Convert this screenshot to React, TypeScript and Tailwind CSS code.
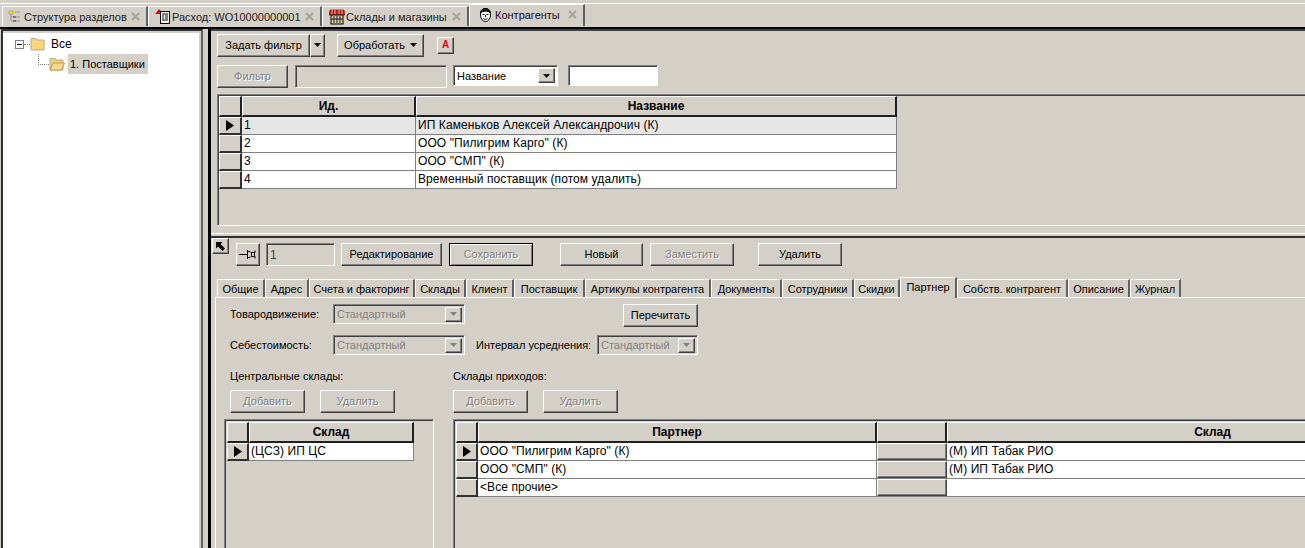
import type { ReactNode } from "react";

const raised = "border border-t-white border-l-white border-r-[#404040] border-b-[#404040] shadow-[inset_-1px_-1px_0_#808080]";
const sunken = "border border-t-[#808080] border-l-[#808080] border-r-white border-b-white shadow-[inset_1px_1px_0_#404040]";
const disabledText = "text-[#808080] [text-shadow:1px_1px_0_#fff]";

function Btn({ className = "h-[23px]", off, def, children }: { className?: string; off?: boolean; def?: boolean; children: ReactNode }) {
  return (
    <div
      className={`shrink-0 flex items-center justify-center pb-[1px] ${className} ${def ? "border border-black shadow-[inset_1px_1px_0_#fff,inset_-1px_-1px_0_#808080]" : raised} ${off ? disabledText : "text-black"}`}
    >
      {children}
    </div>
  );
}

function ArrowDown({ gray }: { gray?: boolean }) {
  return (
    <svg width="7" height="4" viewBox="0 0 7 4">
      <path d="M0 0h7L3.5 4z" fill={gray ? "#808080" : "#000"} />
    </svg>
  );
}

function Combo({ className, text }: { className: string; text: string }) {
  return (
    <div className={`h-[20px] shrink-0 flex items-center justify-between pl-[3px] pr-[2px] text-[#808080] ${sunken} ${className}`}>
      <span>{text}</span>
      <div className={`w-[17px] h-[15px] flex items-center justify-center ${raised}`}>
        <ArrowDown gray />
      </div>
    </div>
  );
}

function Tab({ icon, label, className, active }: { icon: ReactNode; label: string; className: string; active?: boolean }) {
  return (
    <div
      className={`shrink-0 flex items-center self-end border-l border-t border-r-2 border-t-white border-l-white border-r-[#606060] ${className} ${active ? "h-[22px] pb-[2px] bg-[#d4d0c8] text-[#1a0a2a]" : "h-[20px] text-[#222]"}`}
    >
      <span className="w-[17px] shrink-0 flex justify-center">{icon}</span>
      <span className="whitespace-nowrap ml-[1px]">{label}</span>
      <svg className="ml-auto mr-[6px] shrink-0" width="9" height="9" viewBox="0 0 9 9">
        <path d="M1 1l7 7M8 1l-7 7" stroke="#a8a49c" strokeWidth="2.2" />
      </svg>
    </div>
  );
}

function SubTab({ label, className, active }: { label: string; className: string; active?: boolean }) {
  return (
    <div
      className={`shrink-0 flex items-center justify-center self-end border-l border-t border-r-2 border-t-white border-l-white border-r-[#606060] whitespace-nowrap ${className} ${active ? "h-[21px] pb-[3px] bg-[#d4d0c8] mb-[-1px] relative" : "h-[18px]"}`}
    >
      {label}
    </div>
  );
}

function HeadCell({ className, children }: { className: string; children?: ReactNode }) {
  return (
    <div className={`h-[21px] shrink-0 flex items-center justify-center text-[12px] font-bold border-r-2 border-b-2 border-r-[#202020] border-b-[#202020] border-t border-l border-t-white border-l-white bg-[#d4d0c8] ${className}`}>
      {children}
    </div>
  );
}

function Indicator({ on, className = "w-[22px]" }: { on?: boolean; className?: string }) {
  return (
    <div className={`h-[18px] shrink-0 flex items-center justify-center border-r-2 border-b-2 border-r-[#303030] border-b-[#303030] border-t border-l border-t-white border-l-white bg-[#d4d0c8] ${className}`}>
      {on && (
        <svg width="8" height="11" viewBox="0 0 8 11">
          <path d="M0 0l8 5.5L0 11z" fill="#000" />
        </svg>
      )}
    </div>
  );
}

function Cell({ className, children }: { className: string; children?: ReactNode }) {
  return (
    <div className={`h-[18px] shrink-0 flex items-center pl-[2px] pb-[1px] text-[12px] tracking-[0.08px] whitespace-nowrap overflow-hidden border-r border-b border-[#808080] text-black ${className}`}>
      {children}
    </div>
  );
}

function Folder({ open }: { open?: boolean }) {
  return (
    <svg width="16" height="14" viewBox="0 0 16 14" className="shrink-0">
      <path d="M1 3V1.500h5L7 3h7v10H1z" fill={open ? "#f4cd7a" : "#fbd47e"} stroke="#b8ac90" />
      {open && <path d="M1 13l3-7h11.500l-3 7z" fill="#fbd98f" stroke="#c49a4a" />}
    </svg>
  );
}

const mainTabs = [
  { label: "Структура разделов", className: "w-[146px] pl-[3px]", icon: (
    <svg width="13" height="13" viewBox="0 0 13 13">
      <rect x="1" y="1" width="4" height="3" fill="#f2e814" stroke="#8a8a30" strokeWidth=".5" />
      <path d="M3 4v7M3 7h3M3 11h3M7 2h5M8 7h4M8 11h4" stroke="#999" />
      <rect x="5" y="6" width="3" height="2" fill="#a060a0" />
      <rect x="5" y="10" width="3" height="2" fill="#708040" />
    </svg>
  ) },
  { label: "Расход: WO10000000001", className: "w-[174px] pl-[5px]", icon: (
    <svg width="16" height="15" viewBox="0 0 16 15">
      <path d="M0 5L4 0l4 5z" fill="#e01010" />
      <rect x="5.500" y="2.500" width="9" height="12" fill="#fff" stroke="#000" />
      <path d="M7 5h6M7 7h2M10 7h3M7 9h2M10 9h3M7 11h6" stroke="#000" />
    </svg>
  ) },
  { label: "Склады и магазины", className: "w-[147px] pl-[5px]", icon: (
    <svg width="16" height="16" viewBox="0 0 16 16">
      <path d="M1 1h14l1 5H0z" fill="#c02010" stroke="#601008" strokeWidth=".6" />
      <path d="M3 1v5M6 1v5M10 1v5M13 1v5" stroke="#f0d0c0" strokeWidth=".8" />
      <rect x="2" y="6" width="12" height="9" fill="#e8d880" stroke="#000" />
      <path d="M5 7v7M8 7v7M11 7v7M2 10h12" stroke="#101060" />
    </svg>
  ) },
  { label: "Контрагенты", className: "w-[116px] pl-[7px]", active: true, icon: (
    <svg width="15" height="16" viewBox="0 0 15 16" fill="none" stroke="#000">
      <ellipse cx="7.500" cy="8" rx="5" ry="6.500" fill="#fff" />
      <path d="M2.500 6c0-6 10-6 10 0-2-2.500-8-2.500-10 0z" fill="#222" />
      <path d="M4.500 7.500h2M8.500 7.500h2M7.500 8v2M5.500 11.500c1 1 3 1 4 0" />
    </svg>
  ) },
];

const subTabs = [
  ["Общие", "w-[48px]"], ["Адрес", "w-[44px]"], ["Счета и факторинг", "w-[106px]"], ["Склады", "w-[51px]"],
  ["Клиент", "w-[48px]"], ["Поставщик", "w-[71px]"], ["Артикулы контрагента", "w-[126px]"], ["Документы", "w-[71px]"],
  ["Сотрудники", "w-[72px]"], ["Скидки", "w-[46px]"], ["Партнер", "w-[57px]"], ["Собств. контрагент", "w-[111px]"],
  ["Описание", "w-[62px]"], ["Журнал", "w-[51px]"],
];

const suppliers = [
  ["1", "ИП Каменьков Алексей Александрочич (К)"],
  ["2", 'ООО "Пилигрим Карго" (К)'],
  ["3", 'ООО "СМП" (К)'],
  ["4", "Временный поставщик (потом удалить)"],
];

const partners = [
  ['ООО "Пилигрим Карго" (К)', "(М) ИП Табак РИО"],
  ['ООО "СМП" (К)', "(М) ИП Табак РИО"],
  ["<Все прочие>", ""],
];

export default function App() {
  return (
    <div className="w-[1305px] h-[548px] overflow-hidden bg-[#d4d0c8] text-[11px] leading-[14px] text-black flex flex-col font-['Liberation_Sans',Arial,sans-serif]">
      {/* document tabs */}
      <div className="h-[29px] shrink-0 flex flex-col border-b-2 border-b-black">
        <div className="h-[4px] shrink-0 border-b border-b-white" />
        <div className="h-[22px] shrink-0 flex pl-[2px]">
          {mainTabs.map((t) => (
            <Tab key={t.label} icon={t.icon} label={t.label} className={t.className} active={t.active} />
          ))}
        </div>
      </div>

      <div className="flex-1 min-h-0 flex">
        {/* tree */}
        <div className="w-[202px] ml-[1px] shrink-0 border-2 border-t-[#303030] border-l-[#303030] border-r-[#606060] border-b-0 pt-[2px] pr-[2px] shadow-[inset_1px_1px_0_#d4d0c8]">
          <div className="h-full bg-white pt-[1px] pl-[12px]">
            <div className="flex items-center h-[20px]">
              <div className="w-[9px] h-[9px] border border-[#808080] flex items-center justify-center">
                <div className="w-[5px] h-[1px] bg-black" />
              </div>
              <div className="w-[6px] border-t border-dotted border-[#808080]" />
              <Folder />
              <span className="ml-[5px] text-[12px]">Все</span>
            </div>
            <div className="flex items-center h-[20px] ml-[23px]">
              <div className="w-[11px] h-[11px] mb-[10px] border-l border-b border-dotted border-[#808080] mt-[1px]" />
              <Folder open />
              <span className="ml-[3px] w-[80px] h-[20px] bg-[#d4d0c8] flex items-center pl-[2px] whitespace-nowrap">1. Поставщики</span>
            </div>
          </div>
        </div>

        {/* right side */}
        <div className="flex-1 min-w-0 ml-[5px] flex flex-col border-l-[3px] border-l-black">
          <div className="h-[205px] shrink-0 pl-[6px] border-b border-b-white border-t-2 border-t-[#404040]">
            <div className="flex items-center mt-[3px] h-[23px]">
              <Btn className="w-[93px] h-[23px]">Задать фильтр</Btn>
              <Btn className="w-[15px] h-[23px]"><ArrowDown /></Btn>
              <Btn className="w-[87px] h-[23px] ml-[12px]"><span className="mr-[5px]">Обработать</span><ArrowDown /></Btn>
              <Btn className="w-[17px] h-[17px] ml-[13px]"><span className="text-[#f00000] font-bold text-[10px]">A</span></Btn>
            </div>
            <div className="flex items-start mt-[8px]">
              <Btn className="w-[71px] h-[23px]" off>Фильтр</Btn>
              <div className={`w-[152px] h-[23px] ml-[7px] ${sunken}`} />
              <div className={`w-[105px] h-[21px] ml-[6px] flex items-center justify-between pl-[3px] pr-[2px] bg-white ${sunken}`}>
                <span>Название</span>
                <div className={`w-[17px] h-[15px] flex items-center justify-center bg-[#d4d0c8] ${raised}`}><ArrowDown /></div>
              </div>
              <div className={`w-[90px] h-[21px] ml-[10px] bg-white ${sunken}`} />
            </div>
            <div className={`mt-[6px] h-[132px] pt-[1px] pl-[1px] border-r-0 ${sunken}`}>
              <div className="flex">
                <HeadCell className="w-[23px]" />
                <HeadCell className="w-[174px]">Ид.</HeadCell>
                <HeadCell className="w-[481px]">Название</HeadCell>
              </div>
              {suppliers.map(([id, name], i) => (
                <div key={id} className="flex">
                  <Indicator className="w-[23px]" on={i === 0} />
                  <Cell className={`w-[174px] ${i === 0 ? "bg-[#e6e6e6]" : "bg-white"}`}>{id}</Cell>
                  <Cell className={`w-[481px] ${i === 0 ? "bg-[#e6e6e6]" : "bg-white"}`}>{name}</Cell>
                </div>
              ))}
            </div>
          </div>

          <div className="h-[2px] shrink-0" />
          <div className="flex-1 min-h-0 border-t-2 border-t-[#303030] flex flex-col">
            <div className="h-[39px] shrink-0 flex">
              <div className="flex w-[25px] shrink-0">
                <div className={`w-[17px] h-[16px] flex items-center justify-center ml-[1px] ${raised}`}>
                  <svg width="9" height="9" viewBox="0 0 9 9"><path d="M0 0h6.500L4.500 2 9 6.500 6.500 9 2 4.500 0 6.500z" fill="#000" /></svg>
                </div>
              </div>
              <div className="flex pt-[5px] h-[29px]">
                <Btn className="w-[24px] h-[23px]">
                  <svg width="20" height="12" viewBox="0 0 20 12" fill="none" stroke="#000">
                    <path d="M1 6.500h8M9.500 2v9M10 3.500h2l1 1h4v-2M10 9.500h2l1-1h4v2M13.500 5v3M16.500 5v3" />
                  </svg>
                </Btn>
                <div className={`w-[69px] h-[23px] ml-[6px] pl-[3px] flex items-center text-[12px] text-[#404040] ${sunken}`}>1</div>
                <Btn className="w-[101px] h-[23px] ml-[6px]">Редактирование</Btn>
                <Btn className="w-[84px] h-[23px] ml-[7px]" off def>Сохранить</Btn>
                <Btn className="w-[83px] h-[23px] ml-[27px]">Новый</Btn>
                <Btn className="w-[84px] h-[23px] ml-[7px]" off>Заместить</Btn>
                <Btn className="w-[84px] h-[23px] ml-[24px]">Удалить</Btn>
              </div>
            </div>

            <div className="flex-1 min-h-0 ml-[4px] flex flex-col">
              <div className="h-[21px] shrink-0 flex pl-[2px] border-b border-b-white">
                {subTabs.map(([label, w]) => (
                  <SubTab key={label} label={label} className={w} active={label === "Партнер"} />
                ))}
              </div>

              <div className="flex-1 min-h-0 border-l border-l-white pl-[8px] flex">
                <div className="w-[210px] shrink-0 flex flex-col">
                  <div className="flex items-center h-[20px] mt-[6px] pl-[6px] w-[250px]">
                    <span className="w-[103px] shrink-0">Товародвижение:</span>
                    <Combo className="w-[132px]" text="Стандартный" />
                  </div>
                  <div className="flex items-center h-[20px] mt-[11px] pl-[6px] w-[250px]">
                    <span className="w-[103px] shrink-0">Себестоимость:</span>
                    <Combo className="w-[132px]" text="Стандартный" />
                  </div>
                  <div className="mt-[14px] pl-[6px] whitespace-nowrap">Центральные склады:</div>
                  <div className="flex mt-[7px] pl-[6px]">
                    <Btn className="w-[75px] h-[23px]" off>Добавить</Btn>
                    <Btn className="w-[75px] h-[23px] ml-[15px]" off>Удалить</Btn>
                  </div>
                  <div className={`mt-[6px] flex-1 min-h-0 pt-[2px] pl-[2px] border-b-0 ${sunken}`}>
                    <div className="flex">
                      <HeadCell className="w-[22px]" />
                      <HeadCell className="w-[165px]">Склад</HeadCell>
                    </div>
                    <div className="flex">
                      <Indicator on />
                      <Cell className="w-[165px] bg-white">(ЦСЗ) ИП ЦС</Cell>
                    </div>
                  </div>
                </div>

                <div className="ml-[19px] flex-1 min-w-0 flex flex-col">
                  <div className="h-[23px] mt-[6px] mb-[-3px] pl-[170px]">
                    <Btn className="w-[75px] h-[23px]">Перечитать</Btn>
                  </div>
                  <div className="flex items-center h-[20px] mt-[11px] pl-[23px]">
                    <span className="w-[121px] shrink-0 whitespace-nowrap">Интервал усреднения:</span>
                    <Combo className="w-[101px]" text="Стандартный" />
                  </div>
                  <div className="mt-[14px] whitespace-nowrap">Склады приходов:</div>
                  <div className="flex mt-[7px]">
                    <Btn className="w-[75px] h-[23px]" off>Добавить</Btn>
                    <Btn className="w-[75px] h-[23px] ml-[15px]" off>Удалить</Btn>
                  </div>
                  <div className={`mt-[6px] flex-1 min-h-0 overflow-hidden pt-[2px] pl-[2px] border-b-0 border-r-0 ${sunken}`}>
                    <div className="flex">
                      <HeadCell className="w-[22px]" />
                      <HeadCell className="w-[399px]">Партнер</HeadCell>
                      <HeadCell className="w-[70px]" />
                      <HeadCell className="w-[532px]">Склад</HeadCell>
                    </div>
                    {partners.map(([partner, store], i) => (
                      <div key={partner} className="flex">
                        <Indicator on={i === 0} />
                        <Cell className="w-[399px] bg-white">{partner}</Cell>
                        <div className="w-[70px] h-[18px] shrink-0 bg-white border-b border-b-[#808080]">
                          <div className={`h-[17px] bg-[#d4d0c8] ${raised}`} />
                        </div>
                        <Cell className="w-[532px] bg-white">{store}</Cell>
                      </div>
                    ))}
                  </div>
                </div>
              </div>
            </div>
          </div>
        </div>
      </div>
    </div>
  );
}
